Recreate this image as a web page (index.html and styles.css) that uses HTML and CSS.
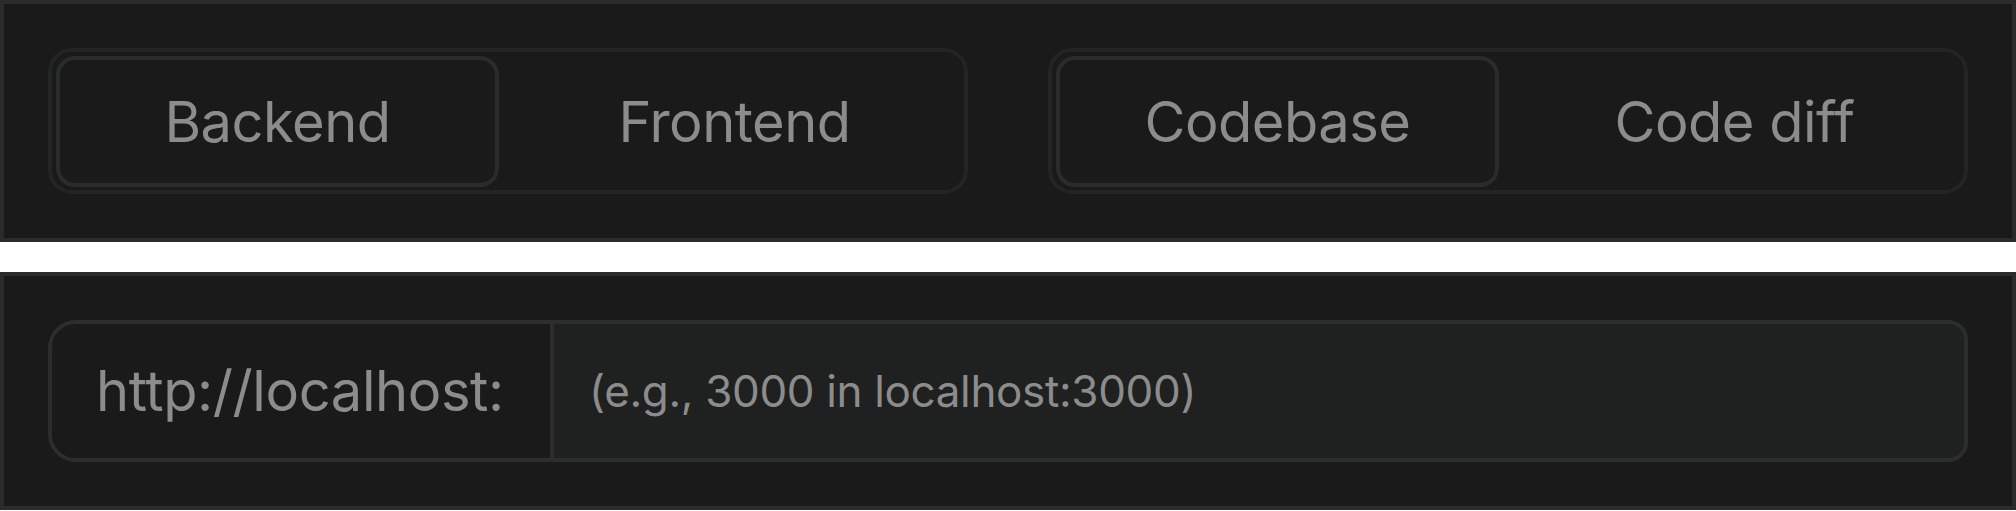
FILE: index.html
```html
<!DOCTYPE html>
<html lang="en">
<head>
<meta charset="utf-8">
<title>Toggles</title>
<link rel="stylesheet" href="styles.css">
</head>
<body>
  <section class="panel">
    <div class="toggle-grid">
      <div class="segmented">
        <button class="tab tab-active">Backend</button>
        <button class="tab tab-rest">Frontend</button>
      </div>
      <div class="segmented">
        <button class="tab tab-active">Codebase</button>
        <button class="tab tab-rest">Code diff</button>
      </div>
    </div>
  </section>
  <section class="panel panel-second">
    <div class="url-group">
      <span class="url-prefix">http://localhost:</span>
      <input class="url-input" type="text" placeholder="(e.g., 3000 in localhost:3000)">
    </div>
  </section>
</body>
</html>
```

FILE: styles.css
```css
* { box-sizing: border-box; }

html, body {
  margin: 0;
  padding: 0;
  background: #ffffff;
}

body {
  font-family: Inter, "Liberation Sans", sans-serif;
  color: #8a8a8a;
}

.panel {
  background: #1a1a1a;
  border: 4px solid #2b2b2b;
  padding: 44px;
}

.panel-second {
  margin-top: 30px;
}

.toggle-grid {
  display: grid;
  grid-template-columns: 1fr 1fr;
  column-gap: 80px;
}

.segmented {
  display: grid;
  grid-template-columns: 443px 1fr;
  border: 4px solid #232424;
  border-radius: 24px;
  padding: 4px 4px 3px 4px;
}

.tab {
  height: 131px;
  background: transparent;
  border: 4px solid transparent;
  border-radius: 19px;
  font-family: Inter, "Liberation Sans", sans-serif;
  font-size: 56px;
  font-weight: 400;
  letter-spacing: -0.5px;
  color: #8c8c8c;
  display: flex;
  align-items: center;
  justify-content: center;
  padding: 0;
  cursor: pointer;
}

.tab-active {
  border-color: #2a2b2b;
  background: #1a1a1a;
}

.tab-rest {
  padding-left: 10px;
}

.url-group {
  display: flex;
  height: 142px;
  border: 4px solid #2c2d2d;
  border-radius: 28px 20px 20px 28px;
  overflow: hidden;
}

.url-prefix {
  width: 498px;
  flex: none;
  display: flex;
  align-items: center;
  padding-left: 44px;
  font-size: 56px;
  letter-spacing: -0.4px;
  color: #8c8c8c;
  background: #1a1a1a;
}

.url-input {
  flex: 1;
  min-width: 0;
  border: none;
  border-left: 4px solid #2c2d2d;
  background: #1f2020;
  padding: 0 0 0 35px;
  font-family: Inter, "Liberation Sans", sans-serif;
  font-size: 44px;
  letter-spacing: -0.35px;
  color: #8c8c8c;
  outline: none;
}

.url-input::placeholder {
  color: #8c8c8c;
  opacity: 1;
}
```
